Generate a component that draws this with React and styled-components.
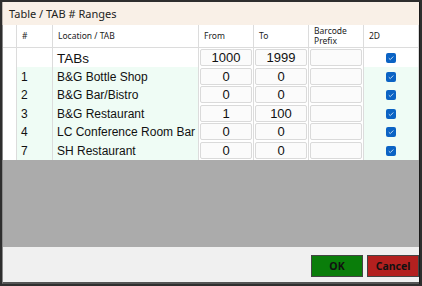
import styled, { createGlobalStyle } from "styled-components";

const GlobalStyle = createGlobalStyle`
  html, body {
    margin: 0;
    padding: 0;
    background: #2e2e2e;
    font-family: "Liberation Sans", Arial, sans-serif;
  }
`;

const COLS = "14px 36px 146px 55px 55px 55px 55px";

const rows = [
  { num: "", name: "TABs", from: "1000", to: "1999", tab: true },
  { num: "1", name: "B&G Bottle Shop", from: "0", to: "0" },
  { num: "2", name: "B&G Bar/Bistro", from: "0", to: "0" },
  { num: "3", name: "B&G Restaurant", from: "1", to: "100" },
  { num: "4", name: "LC Conference Room Bar", from: "0", to: "0" },
  { num: "7", name: "SH Restaurant", from: "0", to: "0" },
];

const Screen = styled.div`
  width: 422px;
  height: 286px;
  padding: 2px;
  box-sizing: border-box;
`;

const Window = styled.div`
  width: 418px;
  height: 282px;
  background: #f0f0f0;
  display: flex;
  flex-direction: column;
  border-right: 1px solid #1a1a1a;
  box-sizing: border-box;
`;

const TitleBar = styled.div`
  height: 23px;
  background: #f9f0e7;
  display: flex;
  align-items: center;
  padding-left: 6px;
  font-family: "Noto Sans", "Open Sans", sans-serif;
  font-size: 11px;
  color: #222;
  border-left: 1px solid #bcb5ae;
`;

const Grid = styled.div`
  flex: 1;
  background: #ababab;
  display: flex;
  flex-direction: column;
  border-left: 1px solid #8a8a8a;
`;

const Row = styled.div`
  display: grid;
  grid-template-columns: ${COLS};
  height: ${(p) => p.$h}px;
  background: #fff;
  border-bottom: 1px solid #dcdcdc;
  box-sizing: border-box;
`;

const HeadCell = styled.div`
  border-right: 1px solid #dcdcdc;
  display: flex;
  align-items: center;
  padding-left: 5px;
  font-family: "Noto Sans", "Open Sans", sans-serif;
  font-size: 8.5px;
  line-height: 10px;
  color: #222;
`;

const Cell = styled.div`
  border-right: 1px solid #dcdcdc;
  background: ${(p) => (p.$mint ? "#effcf5" : "#fff")};
  display: flex;
  align-items: center;
  justify-content: ${(p) => (p.$center ? "center" : "flex-start")};
  padding-left: ${(p) => (p.$center ? 0 : 4)}px;
  padding-top: 1px;
  font-size: ${(p) => (p.$big ? 13.5 : 12)}px;
  color: #111;
  box-sizing: border-box;
  overflow: hidden;
  white-space: nowrap;
`;

const InputCell = styled.div`
  border-right: 1px solid #dcdcdc;
  padding: 1px;
  display: flex;
  background: #fff;
`;

const Input = styled.div`
  flex: 1;
  border: 1px solid #dadada;
  border-radius: 2px;
  background: #fbfbfb;
  display: flex;
  align-items: center;
  justify-content: center;
  font-size: 13px;
  color: #111;
`;

const Check = styled.div`
  width: 10px;
  height: 10px;
  border-radius: 2px;
  background: #0b63c4;
  display: flex;
  align-items: center;
  justify-content: center;
`;

const Footer = styled.div`
  height: 37px;
  display: flex;
  justify-content: flex-end;
  align-items: flex-start;
  gap: 4px;
  padding: 8px 0 0 0;
  box-sizing: border-box;
  border-left: 1px solid #8a8a8a;
  border-bottom: 2px solid #555;
`;

const Button = styled.button`
  width: 52px;
  height: 22px;
  border: 1px solid #444;
  background: ${(p) => p.$bg};
  color: #111;
  font-family: "Noto Sans", "Open Sans", sans-serif;
  font-size: 10.5px;
  font-weight: bold;
  padding: 0;
`;

const CheckMark = () => (
  <svg width="8" height="8" viewBox="0 0 8 8">
    <path d="M1.8 4.2 L3.3 5.6 L6.3 2.5" stroke="#cfe3f7" strokeWidth="0.9" fill="none" />
  </svg>
);

const App = () => {
  return (
    <Screen>
      <GlobalStyle />
      <Window>
        <TitleBar>Table / TAB # Ranges</TitleBar>
        <Grid>
          <Row $h={23}>
            <HeadCell />
            <HeadCell>#</HeadCell>
            <HeadCell>Location / TAB</HeadCell>
            <HeadCell>From</HeadCell>
            <HeadCell>To</HeadCell>
            <HeadCell>
              Barcode
              <br />
              Prefix
            </HeadCell>
            <HeadCell>2D</HeadCell>
          </Row>
          {rows.map((r, i) => (
            <Row key={i} $h={i === 0 ? 19 : 18.4}>
              <Cell />
              <Cell $mint={!r.tab}>{r.num}</Cell>
              <Cell $mint={!r.tab} $big={r.tab}>
                {r.name}
              </Cell>
              <InputCell>
                <Input>{r.from}</Input>
              </InputCell>
              <InputCell>
                <Input>{r.to}</Input>
              </InputCell>
              <InputCell>
                <Input />
              </InputCell>
              <Cell $mint={!r.tab} $center>
                <Check>
                  <CheckMark />
                </Check>
              </Cell>
            </Row>
          ))}
        </Grid>
        <Footer>
          <Button $bg="#0a7d0a">OK</Button>
          <Button $bg="#b3201f">Cancel</Button>
        </Footer>
      </Window>
    </Screen>
  );
};

export default App;
